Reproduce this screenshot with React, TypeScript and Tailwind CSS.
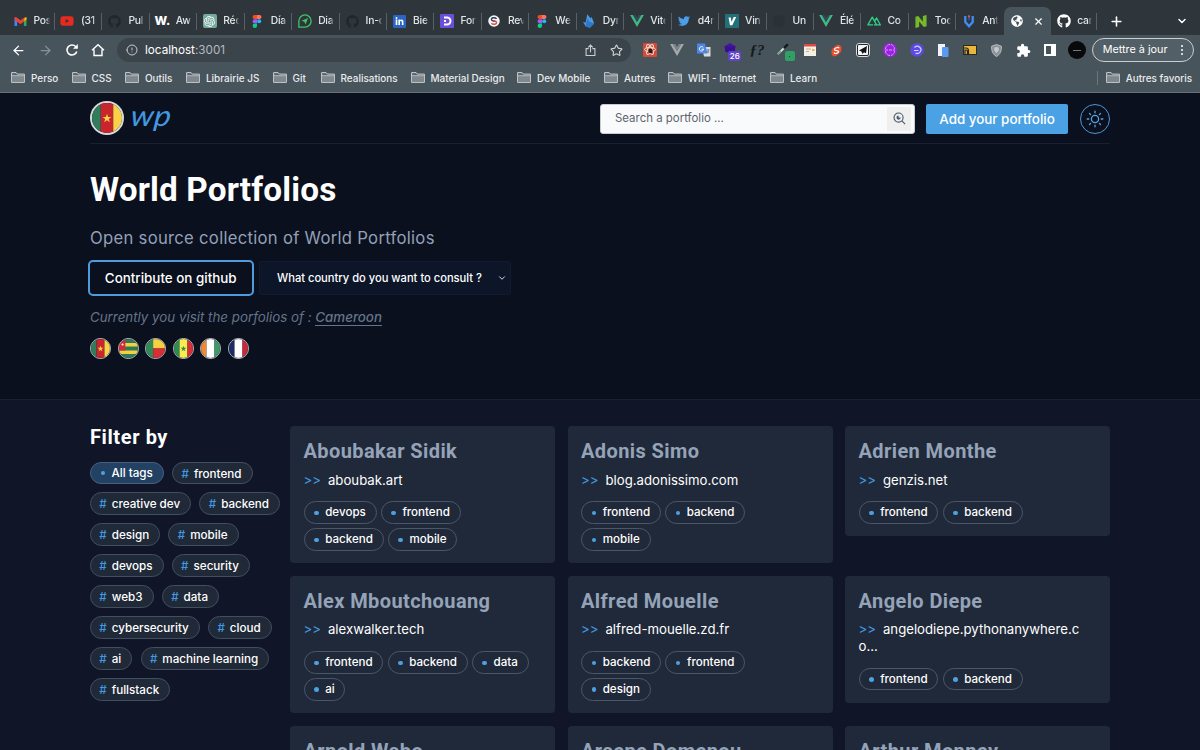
import type { ReactNode } from "react";
import { FaGithub, FaTwitter, FaYoutube, FaLinkedinIn, FaGlobeAmericas } from "react-icons/fa";
import { SiOpenai } from "react-icons/si";
import { ArrowLeft, ArrowRight, ChevronDown, Plus, X, Star, Info } from "lucide-react";

const Figma = () => (
  <svg viewBox="0 0 12 16" className="h-[13px] w-[10px]">
    <path d="M3 0h3v5H3a2.500 2.500 0 0 1 0-5z" fill="#f24e1e" />
    <path d="M6 0h3a2.500 2.500 0 0 1 0 5H6z" fill="#ff7262" />
    <path d="M3 5.300h3v5H3a2.500 2.500 0 0 1 0-5z" fill="#a259ff" />
    <circle cx="8.700" cy="7.800" r="2.500" fill="#1abcfe" />
    <path d="M3 10.600h3v2.500a2.700 2.700 0 1 1-3-2.500z" fill="#0acf83" />
  </svg>
);

const Vue = ({ gray = false }: { gray?: boolean }) => (
  <svg viewBox="0 0 16 14" className="h-[12px] w-[14px]">
    <path d="M0 0h3.200L8 8.300 12.800 0H16L8 14z" fill={gray ? "#a5aaad" : "#41b883"} />
    <path d="M3.200 0H6l2 3.500L10 0h2.800L8 8.300z" fill={gray ? "#7d8386" : "#34495e"} />
  </svg>
);

const Gmail = () => (
  <svg viewBox="0 0 16 12" className="h-[9px] w-[13px]">
    <path d="M0 1.500V12h3.500V5z" fill="#4285f4" />
    <path d="M16 1.500V12h-3.500V5z" fill="#34a853" />
    <path d="M12.500 1.200 16 0v3.500l-3.500 2.600z" fill="#fbbc04" />
    <path d="M0 1.500C0 0 1.700-.4 2.800.5L8 4.400 13.200.5V5.600L8 9.500 0 3.500z" fill="#ea4335" />
  </svg>
);

const ChatGpt = () => (
  <span className="flex h-[14px] w-[14px] items-center justify-center rounded-[2px] bg-[#74aa9c]">
    <SiOpenai className="h-[11px] w-[11px] text-white" />
  </span>
);

const PaperPlane = () => (
  <svg viewBox="0 0 16 16" className="h-[14px] w-[14px]">
    <path d="M1 15V8a7 7 0 1 1 7 7z" fill="none" stroke="#3fc466" strokeWidth="1.500" />
    <path d="M11.600 4.500 4 7.800l3.300 1 1.200 3.200z" fill="#3fc466" />
  </svg>
);

const Gh = () => <FaGithub className="h-[13px] w-[13px] text-[#20272b]" />;

type Tab = { icon: ReactNode; title: string };

const tabs: Tab[] = [
  { icon: <Gmail />, title: "Pos" },
  { icon: <FaYoutube className="h-[14px] w-[14px] text-[#e62a1f]" />, title: "(31" },
  { icon: <Gh />, title: "Pul" },
  { icon: <span className="text-[12px] font-extrabold text-white">W.</span>, title: "Aw" },
  { icon: <ChatGpt />, title: "Réc" },
  { icon: <Figma />, title: "Día" },
  { icon: <PaperPlane />, title: "Dia" },
  { icon: <Gh />, title: "In-d" },
  {
    icon: (
      <span className="flex h-[13px] w-[13px] items-center justify-center rounded-[1px] bg-[#2a66c0]">
        <FaLinkedinIn className="h-[9px] w-[9px] text-white" />
      </span>
    ),
    title: "Bie",
  },
  {
    icon: (
      <svg viewBox="0 0 14 14" className="h-[14px] w-[14px]">
        <rect width="14" height="14" rx="1" fill="#6a50d8" />
        <path d="M4 3.500h3a3.500 3.500 0 0 1 0 7H4M4 7h2" fill="none" stroke="#fff" strokeWidth="2" />
      </svg>
    ),
    title: "For",
  },
  {
    icon: (
      <svg viewBox="0 0 14 14" className="h-[12px] w-[12px]">
        <circle cx="7" cy="7" r="6.700" fill="#f3f5f6" />
        <path d="M10 4.500C8 2.300 3.300 3 4.200 5.800 4.700 7 7 6.800 8 7.600" fill="none" stroke="#27415a" strokeWidth="1.700" />
        <path d="M4 9.500c2 2.200 6.700 1.500 5.800-1.300C9.300 7 7 7.200 6 6.400" fill="none" stroke="#dd4b4f" strokeWidth="1.700" />
      </svg>
    ),
    title: "Rev",
  },
  { icon: <Figma />, title: "We" },
  {
    icon: (
      <svg viewBox="0 0 14 16" className="h-[14px] w-[12px]">
        <path d="M5 0l4 5 1-2 3 8-5 5-5-2-3-5 3 1z" fill="#4a9be8" />
        <path d="M5 5l3 4 5 2-5 5-5-2z" fill="#2f78c8" />
      </svg>
    ),
    title: "Dyr",
  },
  { icon: <Vue />, title: "Vite" },
  { icon: <FaTwitter className="h-[12px] w-[12px] text-[#4a9eea]" />, title: "d4r" },
  {
    icon: (
      <svg viewBox="0 0 14 14" className="h-[14px] w-[14px]">
        <rect width="14" height="14" rx="1" fill="#237078" />
        <path d="M3.500 3.500h2.300l.7 4.500L8.700 3h2.500L7.300 11.200H5z" fill="#fff" />
      </svg>
    ),
    title: "Vin",
  },
  { icon: <span className="h-[12px] w-[12px] rounded-full bg-[#2b3236]" />, title: "Un" },
  { icon: <Vue />, title: "Élé" },
  {
    icon: (
      <svg viewBox="0 0 16 11" className="h-[10px] w-[14px]">
        <path d="M7 10H1L6 1l5 9M8.500 6l2.500-4 4.300 8H8" fill="none" stroke="#2fcf87" strokeWidth="1.500" strokeLinejoin="round" />
      </svg>
    ),
    title: "Co",
  },
  {
    icon: (
      <svg viewBox="0 0 12 14" className="h-[13px] w-[12px]">
        <path d="M0 2l3-1 5 6V1l4-1v12l-3 1-5-6v6l-4 1z" fill="#76b82a" />
      </svg>
    ),
    title: "Too",
  },
  {
    icon: (
      <svg viewBox="0 0 12 14" className="h-[13px] w-[12px]">
        <path d="M2 1v6.500L6 12l4-4.500V1" fill="none" stroke="#3f8df0" strokeWidth="2.500" />
        <path d="M6 0v6" stroke="#37508a" strokeWidth="2" />
        <circle cx="6" cy="1.500" r="1.200" fill="#e2504d" />
      </svg>
    ),
    title: "Ant",
  },
];

function TabStrip() {
  return (
    <div className="flex h-[35px] shrink-0 items-end bg-[#2e363b] pl-[7.500px]">
      {tabs.map((tab, i) => (
        <div key={i} className="flex h-7 w-[47.450px] shrink-0 items-center">
          <div className="flex w-[25px] justify-center">{tab.icon}</div>
          <div className="ml-px w-[17px] text-[10.300px] font-medium tracking-[-0.2px] whitespace-nowrap text-[#e3e6e8] [mask-image:linear-gradient(to_right,#000_70%,transparent_95%)]">
            {tab.title}
          </div>
          {i < tabs.length - 1 && <div className="ml-auto h-[17px] w-px bg-[#566067]" />}
        </div>
      ))}
      <div className="flex h-7 w-[47px] shrink-0 items-center justify-between rounded-t-[7px] bg-[#48545c] pr-[7px] pl-[7px]">
        <FaGlobeAmericas className="h-3 w-3 text-white" />
        <X className="h-[11px] w-[11px] text-white" strokeWidth={2.500} />
      </div>
      <div className="flex h-7 w-[46px] shrink-0 items-center">
        <FaGithub className="ml-[6.500px] h-[14px] w-[14px] text-white" />
        <div className="ml-[6px] w-[15px] text-[10.300px] font-medium tracking-[-0.2px] text-[#e3e6e8] [mask-image:linear-gradient(to_right,#000_70%,transparent)]">
          car
        </div>
        <div className="ml-auto h-[17px] w-px bg-[#566067]" />
      </div>
      <div className="flex h-7 flex-1 items-center justify-between pr-3 pl-[12px] text-white">
        <Plus className="h-[15px] w-[15px]" strokeWidth={2.500} />
        <ChevronDown className="h-3 w-3" strokeWidth={3} />
      </div>
    </div>
  );
}

const extensions: ReactNode[] = [
  <svg viewBox="0 0 14 14" className="h-[14px] w-[14px]">
    <rect width="14" height="14" rx="1" fill="#d34a35" />
    <g fill="none" stroke="#f3d8d2" strokeWidth="1">
      <ellipse cx="7" cy="6.500" rx="5.500" ry="2.200" />
      <ellipse cx="7" cy="6.500" rx="5.500" ry="2.200" transform="rotate(60 7 6.500)" />
      <ellipse cx="7" cy="6.500" rx="5.500" ry="2.200" transform="rotate(120 7 6.500)" />
    </g>
    <circle cx="7.500" cy="8" r="2.300" fill="#2d1713" />
  </svg>,
  <Vue gray />,
  <svg viewBox="0 0 14 14" className="h-[14px] w-[14px]">
    <path d="M5 4h8.500v9.500H7z" fill="#d9dde0" />
    <path d="M0 .5h8l2.500 10H0z" fill="#4c86e6" />
    <path d="M6.300 4.500a2.200 2.200 0 1 0 .4 1.700H4.600" fill="none" stroke="#fff" />
    <path d="M9.500 7h3M11 6v1M12 7l-2 3M10.500 8l1.500 2" stroke="#6f7a80" strokeWidth=".8" />
  </svg>,
  <span className="relative flex h-[14px] w-[14px]">
    <svg viewBox="0 0 14 12" className="h-[11px] w-[14px]">
      <path d="M7 0l7 4-7 4-7-4z" fill="#43159f" />
      <path d="M1.500 4h11v5L7 12 1.500 9z" fill="#3a1090" />
    </svg>
    <span className="absolute top-[8px] left-[5px] rounded-[2px] bg-[#6044c8] px-[1.500px] text-[8px] leading-[10px] font-medium text-white">
      26
    </span>
  </span>,
  <span className="font-['Liberation_Serif',serif] text-[15px] leading-none font-bold text-[#15191c] italic">ƒ?</span>,
  <span className="relative flex h-[14px] w-[14px]">
    <svg viewBox="0 0 14 14" className="h-[13px] w-[13px]">
      <path d="M1 12l7-7" stroke="#dfe4e6" strokeWidth="2.200" />
      <path d="M1 12l3-3" stroke="#4aa269" strokeWidth="1.500" />
      <path d="M8 5l3-3" stroke="#14181a" strokeWidth="2.500" strokeLinecap="round" />
    </svg>
    <span className="absolute top-[8px] left-[8px] flex h-[10px] w-[10px] items-center justify-center rounded-[2px] bg-[#31a066]">
      <span className="h-px w-px bg-[#12492c]" />
    </span>
  </span>,
  <svg viewBox="0 0 12 12" className="h-[12px] w-[12px]">
    <rect width="12" height="12" fill="#f3f0e6" />
    <path d="M0 0h12v2.500H0z" fill="#dc4b43" />
    <path d="M2 5h5M2 7.500h3" stroke="#d1a7a0" />
    <path d="M8 5h2.500v2H8z" fill="#efb24a" />
  </svg>,
  <svg viewBox="0 0 12 14" className="h-[13px] w-[11px]">
    <path d="M6.500 1C9-.3 12 2 11.300 5 12 7.500 11 9.300 5.500 13 3 14.300 0 12 .7 9 0 6.500 1 4.700 6.500 1z" fill="#e8502f" />
    <path d="M8.800 4.600C8 2.500 3.500 4.500 3.800 6c.3 1.700 4.500.6 4.500 2.300 0 1.500-4.300 3-5 .9" fill="none" stroke="#fff" strokeWidth="1.300" />
  </svg>,
  <svg viewBox="0 0 14 14" className="h-[14px] w-[14px]">
    <rect x=".5" y=".5" width="13" height="13" rx="2.500" fill="#20272b" stroke="#d7dbdd" />
    <rect x="2" y="2" width="10" height="10" rx="1" fill="#f5f6f6" />
    <path d="M11 3L3 7.500l2.500 1L6.500 11 8 9.300l2 1z" fill="#101416" />
  </svg>,
  <svg viewBox="0 0 14 14" className="h-[14px] w-[14px]">
    <circle cx="7" cy="7" r="7" fill="#9923df" />
    <path d="M2.500 6a4.500 4.500 0 0 1 9 0M2.500 8a4.500 4.500 0 0 0 9 0M2 7h10" fill="none" stroke="#df9cf5" strokeDasharray="3 1" />
  </svg>,
  <svg viewBox="0 0 14 14" className="h-[14px] w-[14px]">
    <circle cx="7" cy="7" r="6.800" fill="#5b4be4" />
    <path d="M4.500 4.500a3.600 3.600 0 1 1 1 5.500M4 7.500h4.500" fill="none" stroke="#d9d3ff" strokeWidth="1.200" />
  </svg>,
  <svg viewBox="0 0 12 13" className="h-[13px] w-[12px]">
    <rect x="1" width="7" height="12" fill="#f1f4f6" />
    <rect x="5" y="3" width="6.500" height="10" rx="1" fill="#5b9af1" />
  </svg>,
  <svg viewBox="0 0 14 10" className="h-[10px] w-[14px]">
    <rect x=".5" y=".5" width="13" height="9" fill="#e8b73c" stroke="#2b2a20" />
    <path d="M2 9.500V5h1a1.500 1.500 0 0 1 1.500 1.500v3M5.500 9.500V5.500A2.500 2.500 0 0 0 3 3H1" fill="none" stroke="#24231d" strokeWidth="1.200" />
  </svg>,
  <svg viewBox="0 0 12 14" className="h-[13px] w-[11px]">
    <path d="M6 .5l5.300 1.800C11.500 8 10 11 6 13.500 2 11 .5 8 .7 2.300z" fill="#899299" stroke="#bec5c9" />
    <path d="M6 3l2.500 1v3L6 10 3.500 7V4z" fill="#c3c9cc" />
  </svg>,
  <svg viewBox="0 0 24 24" className="h-[15px] w-[15px]" fill="#fff">
    <path d="M20.500 11H19V7a2 2 0 0 0-2-2h-4V3.500a2.500 2.500 0 0 0-5 0V5H4a2 2 0 0 0-2 2v3.800h1.500a2.700 2.700 0 0 1 0 5.400H2V20a2 2 0 0 0 2 2h3.800v-1.500a2.700 2.700 0 0 1 5.400 0V22H17a2 2 0 0 0 2-2v-4h1.500a2.500 2.500 0 0 0 0-5z" />
  </svg>,
  <svg viewBox="0 0 12 12" className="h-[12px] w-[12px]">
    <rect x="1" y="1" width="10" height="10" fill="none" stroke="#fff" strokeWidth="2" />
    <path d="M7 1h5v10H7z" fill="#fff" />
  </svg>,
];

function Toolbar() {
  return (
    <div className="flex h-[30px] shrink-0 items-center bg-[#48545c] pl-[11px] text-white">
      <ArrowLeft className="h-[15px] w-[15px]" />
      <ArrowRight className="ml-[12px] h-[15px] w-[15px] text-[#879096]" />
      <svg viewBox="0 0 14 14" className="ml-[12px] h-[14px] w-[14px]" fill="none" stroke="currentColor" strokeWidth="1.600">
        <path d="M11.800 8.500A5 5 0 1 1 10.600 3.500l1.500 1.500" />
        <path d="M12.800 1v4.800H8z" fill="currentColor" stroke="none" />
      </svg>
      <svg viewBox="0 0 14 14" className="ml-[12px] h-[14px] w-[14px]" fill="none" stroke="currentColor" strokeWidth="1.400">
        <path d="M1 7.200L7 1.800l6 5.400M3 6.500v6h8v-6" />
      </svg>
      <div className="ml-[12px] flex h-[23.500px] w-[514px] shrink-0 items-center rounded-full bg-[#3b444b] pr-[8px] pl-[9px]">
        <Info className="h-3 w-3 rotate-180 text-[#c5cacd]" />
        <span className="ml-[7px] pt-[1.500px] text-[11.700px] text-white">
          localhost<span className="text-[#b4babd]">:3001</span>
        </span>
        <svg viewBox="0 0 12 14" className="ml-auto h-[13px] w-[11px]" fill="none" stroke="#c9ced1" strokeWidth="1.200">
          <path d="M4 5H1.200v7.500h9.600V5H8M6 9V1.200M3.500 3.500L6 1l2.500 2.500" />
        </svg>
        <Star className="ml-[14px] h-[13px] w-[13px] text-[#d3d7da]" />
      </div>
      <div className="ml-[6px] flex shrink-0">
        {extensions.map((ext, i) => (
          <div key={i} className="flex h-6 w-[26.650px] items-center justify-center">
            {ext}
          </div>
        ))}
      </div>
      <div className="ml-[4.500px] flex h-[18px] w-[18px] shrink-0 items-center justify-center rounded-full bg-[#08090a]">
        <div className="h-px w-2 bg-[#777]" />
      </div>
      <div className="ml-[6px] flex h-[23.500px] w-[102px] shrink-0 items-center justify-between rounded-full border border-[#c9ced1] bg-[#535f66] pr-[10px] pl-[10px] text-[10.800px] whitespace-nowrap text-white">
        <span className="pt-px">Mettre à jour</span>
        <span className="flex flex-col gap-[2px]">
          <span className="h-[2px] w-[2px] rounded-full bg-white" />
          <span className="h-[2px] w-[2px] rounded-full bg-white" />
          <span className="h-[2px] w-[2px] rounded-full bg-white" />
        </span>
      </div>
    </div>
  );
}

const FolderIcon = () => (
  <svg viewBox="0 0 14 11" className="h-[11px] w-[14px] shrink-0">
    <path d="M.6 10.400V.6h4.500l1.200 1.500h7.100v8.300z" fill="#59646b" stroke="#c9ced1" strokeWidth="1" />
    <path d="M1 4h12v6H1z" fill="#7f888e" />
    <path d="M1 3.700h12" stroke="#c9ced1" strokeWidth=".8" />
  </svg>
);

const bookmarks = [
  { name: "Perso", width: "w-[60.500px]" },
  { name: "CSS", width: "w-[53.500px]" },
  { name: "Outils", width: "w-[61px]" },
  { name: "Librairie JS", width: "w-[86.500px]" },
  { name: "Git", width: "w-[48px]" },
  { name: "Realisations", width: "w-[90px]" },
  { name: "Material Design", width: "w-[106.500px]" },
  { name: "Dev Mobile", width: "w-[87px]" },
  { name: "Autres", width: "w-[64px]" },
  { name: "WIFI - Internet", width: "w-[102px]" },
  { name: "Learn", width: "w-[60px]" },
];

function Bookmarks() {
  return (
    <div className="flex h-[28px] shrink-0 items-center border-b border-[#66727a] bg-[#48545c] pb-px pl-[11px] text-[9.950px] font-medium text-[#e8ebec]">
      {bookmarks.map((b) => (
        <div key={b.name} className={`flex shrink-0 items-center gap-[6px] whitespace-nowrap ${b.width}`}>
          <FolderIcon />
          {b.name}
        </div>
      ))}
      <div className="ml-auto flex items-center gap-[6px] border-l border-[#6b757b] pr-[8px] pl-[8px]">
        <FolderIcon />
        Autres favoris
      </div>
    </div>
  );
}

type Country = "cm" | "tg" | "bj" | "sn" | "ci" | "fr";

const star = "M12 8.600l.85 2.600h2.750l-2.200 1.600.85 2.600L12 13.800l-2.250 1.600.85-2.600-2.200-1.600h2.750z";

const flagArt: Record<Country, ReactNode> = {
  cm: (
    <>
      <path d="M0 0h7v24H0z" fill="#2f7d5b" />
      <path d="M7 0h10v24H7z" fill="#c9252d" />
      <path d="M17 0h7v24h-7z" fill="#f8d34a" />
      <path d={star} fill="#f8d34a" />
    </>
  ),
  tg: (
    <>
      <path d="M0 0h24v24H0z" fill="#2f7a55" />
      <path d="M0 5h24v4.600H0zM0 14.400h24V19H0z" fill="#f3cf45" />
      <path d="M0 0h8v14.400H0z" fill="#cf2b3c" />
      <circle cx="4.500" cy="7" r="1.300" fill="#fff" />
    </>
  ),
  bj: (
    <>
      <path d="M0 0h9v24H0z" fill="#2f8a57" />
      <path d="M9 0h15v12H9z" fill="#f8d140" />
      <path d="M9 12h15v12H9z" fill="#dc2c35" />
    </>
  ),
  sn: (
    <>
      <path d="M0 0h7v24H0z" fill="#2c8c51" />
      <path d="M7 0h10v24H7z" fill="#f9ec4f" />
      <path d="M17 0h7v24h-7z" fill="#d62f38" />
      <path d={star} fill="#2c8c51" />
    </>
  ),
  ci: (
    <>
      <path d="M0 0h7v24H0z" fill="#ee8a35" />
      <path d="M7 0h10v24H7z" fill="#fff" />
      <path d="M17 0h7v24h-7z" fill="#3d9b68" />
    </>
  ),
  fr: (
    <>
      <path d="M0 0h7v24H0z" fill="#1d2c66" />
      <path d="M7 0h10v24H7z" fill="#fff" />
      <path d="M17 0h7v24h-7z" fill="#c62b3b" />
    </>
  ),
};

const Flag = ({ country }: { country: Country }) => (
  <svg viewBox="0 0 24 24" className="h-full w-full">
    {flagArt[country]}
  </svg>
);

const countries: Country[] = ["cm", "tg", "bj", "sn", "ci", "fr"];

function Navbar() {
  return (
    <nav className="flex h-[51px] items-center border-b border-[#1a2231]">
      <div className="h-[34px] w-[34px] overflow-hidden rounded-full border-2 border-[#d5d8dc]">
        <Flag country="cm" />
      </div>
      <span className="ml-[7px] -mt-[7px] origin-left scale-x-110 -skew-x-6 font-[Lato,sans-serif] text-[29px] leading-none tracking-[0.5px] text-[#4299e1] italic">
        wp
      </span>
      <div className="ml-auto flex items-center pt-px">
        <div className="flex h-[30px] w-[315px] items-center rounded-[3px] border border-[#c8ccd2] bg-[#f9fafb] pr-[3px] pl-[14px]">
          <span className="pt-px text-[11.450px] text-[#5d636e]">Search a portfolio ...</span>
          <span className="ml-auto flex h-6 w-[24px] items-center justify-center bg-[#efefef]">
            <svg viewBox="0 0 14 14" className="h-[13px] w-[13px]" fill="none" stroke="#4a5a6c" strokeWidth="1.200">
              <circle cx="6" cy="6" r="4.900" />
              <path d="M9.600 9.600l3.400 3.400" />
              <path d="M6 3.700A2.300 2.300 0 1 0 8.300 6H6z" fill="#4a5a6c" stroke="none" />
            </svg>
          </span>
        </div>
        <div className="ml-[11px] flex h-[30px] w-[142px] items-center justify-center rounded-[2px] bg-[#4aa1e4] pt-px text-[13.400px] font-medium whitespace-nowrap text-white">
          Add your portfolio
        </div>
        <div className="ml-[12px] flex h-[30px] w-[30px] items-center justify-center rounded-full border-[1.500px] border-[#4f95d6] text-[#5aa2e0]">
          <svg viewBox="0 0 18 18" className="h-[18px] w-[18px]" fill="none" stroke="currentColor" strokeWidth="1.300" strokeLinecap="round">
            <circle cx="9" cy="9" r="3.600" />
            <path d="M9 1.200v1.600M9 15.200v1.600M1.200 9h1.600M15.200 9h1.600M3.500 3.500l1.100 1.100M13.400 13.400l1.100 1.100M3.500 14.500l1.100-1.100M13.400 4.600l1.100-1.100" />
          </svg>
        </div>
      </div>
    </nav>
  );
}

function Hero() {
  return (
    <header className="h-[306.500px] shrink-0 border-b border-[#1a2133] bg-[#0a101d] px-[90px]">
      <Navbar />
      <h1 className="mt-[26px] font-[Roboto,sans-serif] text-[33.300px] leading-[40px] font-bold tracking-[0.150px] text-white">
        World Portfolios
      </h1>
      <p className="mt-[16px] text-[16.670px] leading-[24px] tracking-[0.280px] text-[#94a0b8]">
        Open source collection of World Portfolios
      </p>
      <div className="mt-[10px] -ml-[2px] flex items-center">
        <div className="flex h-[36px] w-[165.500px] items-center justify-center rounded-[5px] border-2 border-[#4f9bdc] text-[13.400px] font-medium text-white">
          Contribute on github
        </div>
        <div className="ml-[5.500px] flex h-[34px] w-[252px] items-center justify-between rounded-[3px] border border-[#111c30] bg-[#0d1629] pr-[3px] pl-[17px] text-[11.150px] font-medium text-white">
          <span className="pt-px">What country do you want to consult ?</span>
          <ChevronDown className="h-[10px] w-[10px]" />
        </div>
      </div>
      <p className="mt-[11px] text-[13.330px] leading-5 text-[#64748b] italic">
        Currently you visit the porfolios of : <span className="border-b border-[#64748b] font-medium">Cameroon</span>
      </p>
      <div className="mt-[11px] flex gap-[6.500px]">
        {countries.map((c) => (
          <div key={c} className="h-[21px] w-[21px] overflow-hidden rounded-full border border-[#c3c7cd]">
            <Flag country={c} />
          </div>
        ))}
      </div>
    </header>
  );
}

const filters = [
  "frontend",
  "creative dev",
  "backend",
  "design",
  "mobile",
  "devops",
  "security",
  "web3",
  "data",
  "cybersecurity",
  "cloud",
  "ai",
  "machine learning",
  "fullstack",
];

function Sidebar() {
  return (
    <aside className="w-[200px] shrink-0">
      <h2 className="-mt-px font-[Roboto,sans-serif] text-[20px] leading-6 font-bold tracking-[0.6px] text-white">Filter by</h2>
      <div className="mt-[12.500px] flex flex-wrap gap-x-[8.300px] gap-y-[8px] text-[11.650px] leading-[22px] font-medium text-white">
        <div className="flex h-[22.900px] items-center rounded-full border border-[#48607e] bg-[#234163] pr-[10px] pl-[10px]">
          <span className="mr-[6.500px] h-1 w-1 rounded-full bg-[#4fa0e0]" />
          All tags
        </div>
        {filters.map((f) => (
          <div key={f} className="h-[22.900px] rounded-full border border-[#434e5e] bg-[#1f2937] pr-[10px] pl-[8.300px] whitespace-nowrap">
            <span className="mr-[5px] text-[#4299e1]">#</span>
            {f}
          </div>
        ))}
      </div>
    </aside>
  );
}

type Portfolio = { name: string; url: string; tags: string[] };

const portfolios: Portfolio[] = [
  { name: "Aboubakar Sidik", url: "aboubak.art", tags: ["devops", "frontend", "backend", "mobile"] },
  { name: "Adonis Simo", url: "blog.adonissimo.com", tags: ["frontend", "backend", "mobile"] },
  { name: "Adrien Monthe", url: "genzis.net", tags: ["frontend", "backend"] },
  { name: "Alex Mboutchouang", url: "alexwalker.tech", tags: ["frontend", "backend", "data", "ai"] },
  { name: "Alfred Mouelle", url: "alfred-mouelle.zd.fr", tags: ["backend", "frontend", "design"] },
  { name: "Angelo Diepe", url: "angelodiepe.pythonanywhere.co...", tags: ["frontend", "backend"] },
  { name: "Arnold Wabo", url: "arnoldwabo.com", tags: ["frontend", "backend"] },
  { name: "Arsene Domenou", url: "arsene.dev", tags: ["frontend", "mobile"] },
  { name: "Arthur Monney", url: "arthurmonney.me", tags: ["frontend", "backend"] },
];

function PortfolioCard({ name, url, tags }: Portfolio) {
  return (
    <article className="rounded-[4px] bg-[#202939] px-[13.500px] pt-[12px] pb-[12.500px]">
      <h3 className="font-[Roboto,sans-serif] text-[20px] leading-[26px] font-bold tracking-[0.400px] text-[#94a3b8]">{name}</h3>
      <p className="mt-[7.500px] text-[13.200px] leading-[16.700px] break-all text-white">
        <span className="mr-[7px] text-[#4299e1]">&gt;&gt;</span>
        {url}
      </p>
      <div className="mt-[13px] flex max-w-[230px] flex-wrap gap-[4.200px] text-[11.600px] font-medium text-white">
        {tags.map((t) => (
          <div key={t} className="flex h-[22.700px] items-center rounded-full border border-[#4b5666] pt-px pr-[9.700px] pl-[9.700px]">
            <span className="mr-[6.500px] h-[4.500px] w-[4.500px] rounded-full bg-[#4fa0e0]" />
            {t}
          </div>
        ))}
      </div>
    </article>
  );
}

export default function App() {
  return (
    <div className="flex h-[750px] w-[1200px] flex-col overflow-hidden bg-[#101528] font-[Inter,sans-serif]">
      <TabStrip />
      <Toolbar />
      <Bookmarks />
      <Hero />
      <main className="flex shrink-0 px-[90px] pt-[26.500px]">
        <Sidebar />
        <div className="grid flex-1 grid-cols-3 items-start gap-[12.500px]">
          {portfolios.map((p) => (
            <PortfolioCard key={p.name} {...p} />
          ))}
        </div>
      </main>
    </div>
  );
}
